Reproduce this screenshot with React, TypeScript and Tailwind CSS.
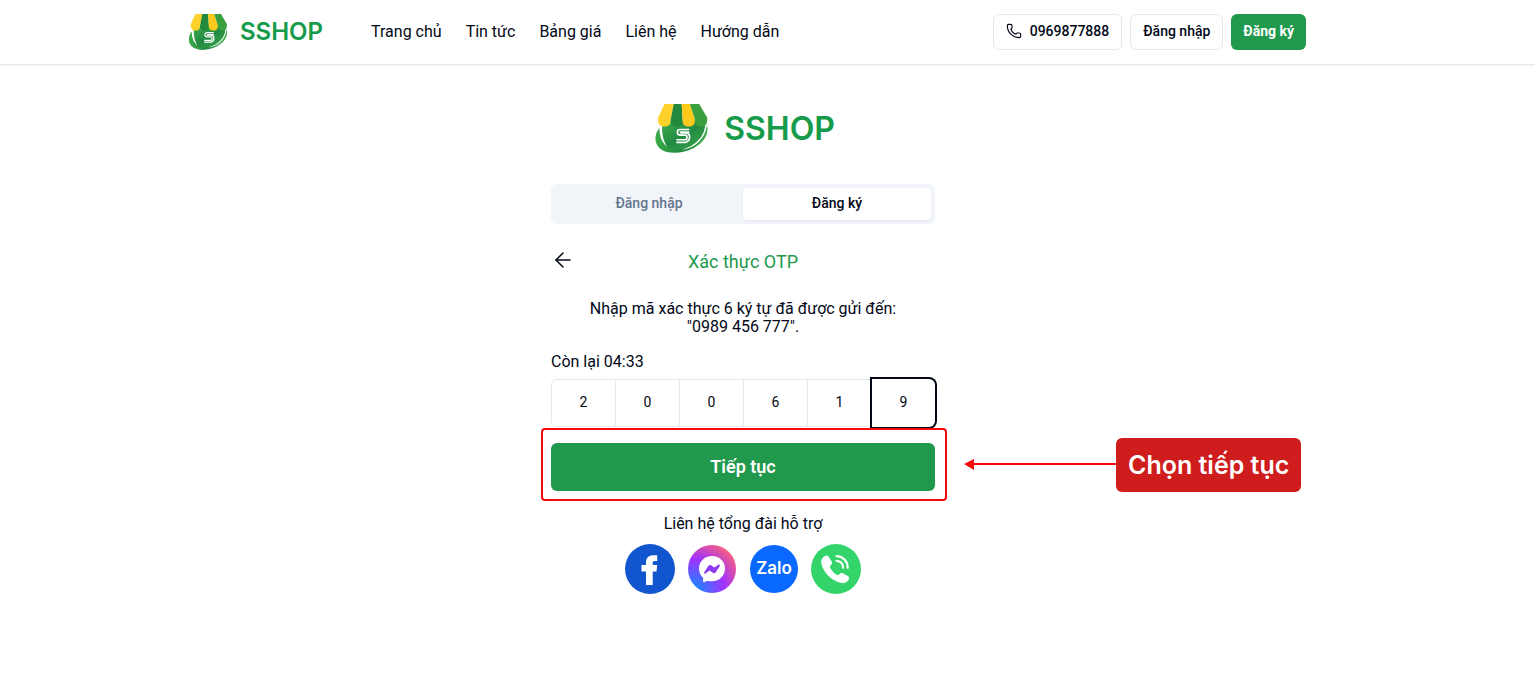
import { useState } from 'react';
import { ArrowLeft, Phone } from 'lucide-react';

const navLinks = ['Trang chủ', 'Tin tức', 'Bảng giá', 'Liên hệ', 'Hướng dẫn'];

function ShopMark({ className }: { className: string }) {
  return (
    <svg viewBox="19 17 157 148" className={className} aria-hidden="true">
      <defs>
        <linearGradient id="bag" x1="0" y1="0" x2="1" y2="1">
          <stop offset="0" stopColor="#3fae4b" />
          <stop offset="0.5" stopColor="#238a43" />
          <stop offset="1" stopColor="#3aa64a" />
        </linearGradient>
        <linearGradient id="swoosh" x1="0" y1="0" x2="1" y2="0">
          <stop offset="0" stopColor="#3cab49" />
          <stop offset="0.5" stopColor="#1f8840" />
          <stop offset="1" stopColor="#3fae4b" />
        </linearGradient>
      </defs>
      <path d="M32 88C14 108 14 138 34 153C56 170 102 168 136 149C168 131 182 104 174 78C172 98 152 124 122 138C82 156 42 146 36 118C33 106 33 96 36 88Z" fill="url(#swoosh)" />
      <path d="M36 66H168C170 96 166 112 151 128C126 152 82 160 58 149C38 132 34 96 36 66Z" fill="url(#bag)" />
      <path d="M31 80C29 108 36 132 54 146C43 130 38 108 39 82Z" fill="#fff" />
      <path d="M169 82C168 112 140 145 98 155C134 152 168 126 174 82Z" fill="#fff" />
      <path d="M46 17H74L65 64V68C65 91 27 91 27 68V58Z" fill="#fdd22b" />
      <path d="M74 17H98L101 64V68C101 91 65 91 65 68V64Z" fill="#238a3d" />
      <path d="M98 17H123L138 64V68C138 91 101 91 101 68V64Z" fill="#fdc91a" />
      <path d="M123 17H151L175 58V68C175 91 138 91 138 68V64Z" fill="#3a9f3f" />
      <g fill="none" stroke="#fff" strokeWidth="5">
        <path d="M121 94H94Q85 94 85 102T94 111H109Q114 111 114 118T109 125H82" />
        <path d="M121 102H96Q93 102 96 104H111Q122 105 122 117T111 133H82" />
      </g>
    </svg>
  );
}

function FacebookIcon() {
  return (
    <svg viewBox="0 0 50 50" className="size-full" aria-hidden="true">
      <circle cx="25" cy="25" r="25" fill="#1256cf" />
      <path d="M21 41V27.500H16.500V21H21V18.500C21 13.500 24 11.300 28.500 11.300H32.200V17H29.700C28.200 17 27.700 17.800 27.700 19V21H32.200L31.500 27.500H27.700V41Z" fill="#fff" />
    </svg>
  );
}

function MessengerIcon() {
  return (
    <svg viewBox="0 0 50 50" className="size-full" aria-hidden="true">
      <defs>
        <radialGradient id="messenger" cx="0.1" cy="0.95" r="1.2">
          <stop offset="0" stopColor="#0a90ff" />
          <stop offset="0.55" stopColor="#a033ff" />
          <stop offset="0.9" stopColor="#f35c87" />
          <stop offset="1" stopColor="#ff7061" />
        </radialGradient>
      </defs>
      <circle cx="25" cy="25" r="24" fill="url(#messenger)" />
      <path d="M25 12C17.500 12 12 17.500 12 24.500C12 28.300 13.500 31.500 16.100 33.800V37.200C16.100 38.200 17 38.500 17.700 38.100L20.700 36.700C22 37.100 23.500 37.300 25 37.300C32.500 37.300 38 31.700 38 24.500C38 17.500 32.500 12 25 12Z" fill="#fff" />
      <path d="M17.200 28.300L21.300 22C22 20.900 23.400 20.600 24.400 21.400L27.300 23.600L31.300 20.800C32.200 20.200 33.400 21.200 32.800 22.100L28.800 28.300C28 29.300 26.700 29.500 25.700 28.800L22.600 26.500L18.600 29.500C17.700 30.100 16.600 29.200 17.200 28.300Z" fill="#8f3cf0" />
    </svg>
  );
}

function CallIcon() {
  return (
    <svg viewBox="0 0 50 50" className="size-full" aria-hidden="true">
      <circle cx="25" cy="25" r="25" fill="#33d56b" />
      <path d="M13.500 12.200C15 11 16.700 11.300 17.700 12.800L20.500 17.300C21.400 18.800 21.100 20.200 19.900 21.300L18.800 22.300C19.500 26 23.800 30.200 27.300 31.300L28.600 29.900C29.600 28.800 31.100 28.600 32.400 29.400L36.800 32.100C38.300 33.100 38.500 34.700 37.500 36C35.800 38.300 33.300 39.500 30.500 39C20.500 37.200 11.500 27.800 10.200 18.500C9.900 16 11.300 13.800 13.500 12.200Z" fill="#fff" />
      <g fill="none" stroke="#fff" strokeWidth="2.200" strokeLinecap="round">
        <path d="M25.500 12.200C32 12.500 36.500 17 36.700 23.800" />
        <path d="M25.500 16.800C29.500 17 32 19.500 32.200 23.800" />
      </g>
    </svg>
  );
}

export default function App() {
  const [code, setCode] = useState(['2', '0', '0', '6', '1', '9']);

  function updateDigit(index: number, value: string) {
    setCode(code.map((digit, i) => (i === index ? value.slice(-1) : digit)));
  }

  return (
    <div className="min-h-screen overflow-x-hidden bg-white font-[Roboto,sans-serif] text-[#020817]">
      <header className="border-b border-gray-200 pr-[49px] shadow-xs">
        <div className="mx-auto flex h-16 max-w-[1126px] items-center justify-between">
          <div className="flex items-center">
            <a href="#" className="flex items-center gap-3 pl-2">
              <ShopMark className="h-9 w-10" />
              <span className="font-[Inter,sans-serif] text-2xl font-semibold text-[#169b4b]">SSHOP</span>
            </a>
            <nav className="ml-12 flex gap-6">
              {navLinks.map((label) => (
                <a key={label} href="#" className="whitespace-nowrap">{label}</a>
              ))}
            </nav>
          </div>
          <div className="flex gap-2 text-sm font-medium">
            <a href="tel:0969877888" className="flex h-9 items-center gap-2 rounded-md border border-slate-200 px-3 pb-0.5">
              <Phone className="size-4" strokeWidth={1.75} />
              0969877888
            </a>
            <button className="h-9 rounded-md border border-slate-200 px-3 pb-0.5">Đăng nhập</button>
            <button className="h-9 rounded-md bg-[#21994d] px-3 pb-0.5 font-bold text-white">Đăng ký</button>
          </div>
        </div>
      </header>

      <main className="pt-[39px] pr-[49px]">
        <div className="mx-auto w-full max-w-sm">
          <div className="flex items-center justify-center gap-4 pl-1">
            <ShopMark className="h-[49px] w-[53px]" />
            <span className="font-[Inter,sans-serif] text-[32px] leading-[48px] font-semibold text-[#169b4b]">SSHOP</span>
          </div>

          <div role="tablist" className="mt-[31px] grid h-10 grid-cols-2 rounded-md bg-slate-100 p-1 text-sm font-medium">
            <button role="tab" aria-selected="false" className="pb-0.5 text-slate-500">Đăng nhập</button>
            <button role="tab" aria-selected="true" className="rounded-sm bg-white pb-0.5 shadow-xs">Đăng ký</button>
          </div>

          <div className="mt-6 grid grid-cols-[24px_1fr_24px] items-start">
            <button aria-label="Quay lại">
              <ArrowLeft className="size-6" strokeWidth={1.5} />
            </button>
            <h1 className="text-center text-lg text-[#21994d]">Xác thực OTP</h1>
          </div>

          <p className="mt-6 text-center leading-[18px]">
            Nhập mã xác thực 6 ký tự đã được gửi đến:
            <br />
            "0989 456 777".
          </p>
          <p className="mt-[14px] leading-6">Còn lại 04:33</p>

          <div className="mt-[5px] flex">
            {code.map((digit, i) => (
              <input
                key={i}
                aria-label={`Ký tự ${i + 1}`}
                inputMode="numeric"
                value={digit}
                onChange={(e) => updateDigit(i, e.target.value)}
                className="h-12 w-full min-w-0 border-y border-r border-slate-200 pb-0.5 text-center text-sm outline-none first:rounded-l-md first:border-l last:rounded-r-md last:border-0 last:ring-2 last:ring-[#020817]"
              />
            ))}
          </div>

          <div className="relative mt-4">
            <button className="h-12 w-full rounded-md bg-[#21994d] text-lg font-semibold text-white">Tiếp tục</button>
            <div className="pointer-events-none absolute -top-[15px] -right-3 -bottom-[10px] -left-[10px] rounded border-2 border-[#f50a0a]" />
            <div className="absolute -top-[5px] left-full ml-[29px] flex items-center">
              <svg viewBox="0 0 152 12" className="h-3 w-[152px]" aria-hidden="true">
                <path d="M0 5L10 0V11Z" fill="#f50a0a" />
                <path d="M9 5H152" stroke="#f50a0a" strokeWidth="2" />
              </svg>
              <span className="rounded-md bg-[#cf1c1c] px-3 py-[9px] font-[Inter,sans-serif] text-[25px] leading-9 font-semibold whitespace-nowrap text-white">Chọn tiếp tục</span>
            </div>
          </div>

          <p className="mt-[21px] text-center leading-6">Liên hệ tổng đài hỗ trợ</p>
          <div className="mt-2 flex justify-center gap-3">
            <a href="#" aria-label="Facebook" className="size-[50px]"><FacebookIcon /></a>
            <a href="#" aria-label="Messenger" className="size-[50px]"><MessengerIcon /></a>
            <a href="#" className="flex size-[50px] items-center justify-center">
              <span className="flex size-12 items-center justify-center rounded-full bg-[#0868ff] font-[Inter,sans-serif] text-[17px] font-semibold text-white">Zalo</span>
            </a>
            <a href="#" aria-label="Điện thoại" className="size-[50px]"><CallIcon /></a>
          </div>
        </div>
      </main>
    </div>
  );
}
